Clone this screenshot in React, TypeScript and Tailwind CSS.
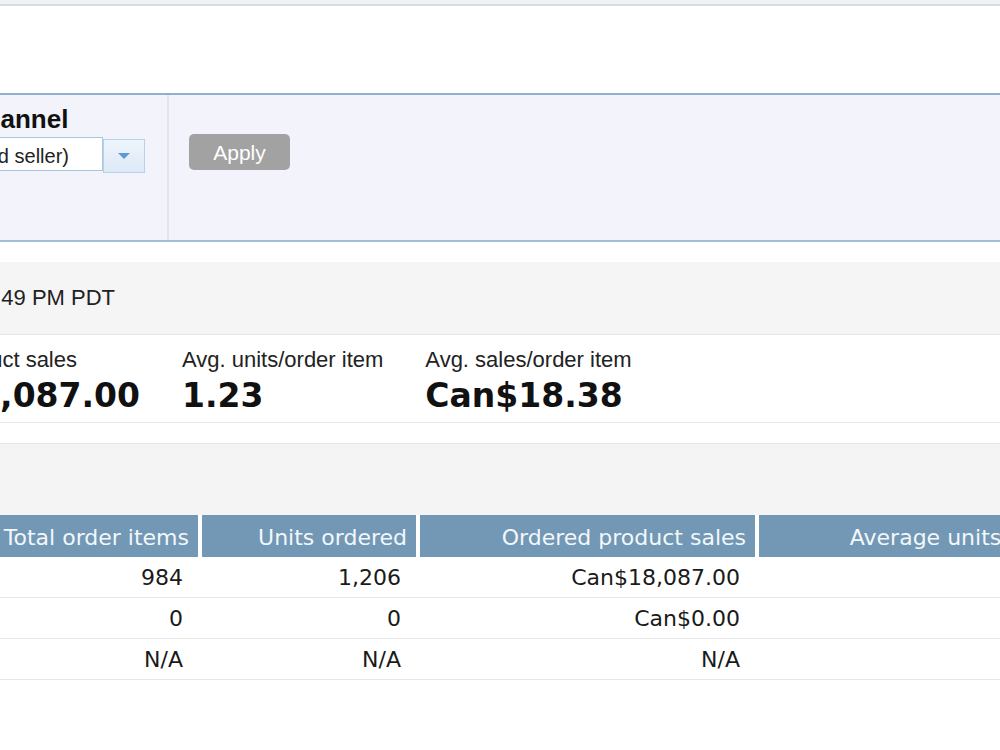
import React from "react";

const arial = "font-['Liberation_Sans',Arial,sans-serif]";
const verdana = "font-['DejaVu_Sans',Verdana,sans-serif]";

const rows = [
  { label: "Selected date range", items: "984", units: "1,206", sales: "Can$18,087.00", avg: "1.23" },
  { label: "Same day last week", items: "0", units: "0", sales: "Can$0.00", avg: "0" },
  { label: "% change", items: "N/A", units: "N/A", sales: "N/A", avg: "N/A" },
];

export default function App() {
  return (
    <div className={`w-[1000px] h-[750px] overflow-hidden bg-white ${arial} text-[#111]`}>
      {/* nav edge */}
      <div className="h-[4px] bg-[#f1f1f1]" />
      <div className="h-[2px] bg-[#d2dce6]" />
      <div className="h-[87px]" />

      {/* Filters */}
      <div className="flex h-[149px] border-t-2 border-b-2 border-t-[#8fb0d2] border-b-[#a0bedb] bg-[#f2f3fb]">
        <div className="w-[169px] shrink-0 border-r-2 border-[#e3e4eb] overflow-hidden">
          <div className="-ml-[105px] pt-[11px]">
            <div className="text-[26px] leading-none font-bold whitespace-nowrap">Sales channel</div>
            <div className="mt-[5px] flex items-start">
              <div className="w-[208px] h-[34px] bg-white border border-[#a9c6e0] flex items-center justify-end pr-[33px] pt-[3px] overflow-hidden">
                <span className="text-[20px] leading-none whitespace-nowrap text-[#222]">
                  Both (Amazon and seller)
                </span>
              </div>
              <div className="mt-[2px] w-[42px] h-[34px] border border-[#b9d1e8] bg-gradient-to-b from-[#eef5fc] to-[#dde9f6] flex items-center justify-center">
                <svg width="14" height="8" viewBox="0 0 14 8">
                  <path d="M1 1h12L7 7z" fill="#5b9bd5" />
                </svg>
              </div>
            </div>
          </div>
        </div>
        <div className="pl-[20px] pt-[39px]">
          <button className="w-[101px] h-[36px] rounded-[5px] bg-[#a2a2a2] text-white text-[21px] leading-none">
            Apply
          </button>
        </div>
      </div>

      <div className="h-[20px]" />

      {/* Last updated */}
      <div className="h-[72px] bg-[#f5f5f5] flex items-center overflow-hidden">
        <div className="w-[420px] -ml-[305px] shrink-0 text-right text-[22px] leading-none text-[#222] whitespace-nowrap">
          Last updated 6/10/2020 1:49 PM PDT
        </div>
      </div>

      {/* Snapshot metrics */}
      <div className="h-[89px] border-t border-b border-[#e6e6e6] flex gap-[42px] pt-[14px] overflow-hidden">
        <div className="w-[340px] -ml-[200px] shrink-0 flex flex-col items-end">
          <div className="mr-[63px] text-[22px] leading-none text-[#222] whitespace-nowrap">Ordered product sales</div>
          <div className={`mt-[8px] text-[33px] leading-none font-bold ${verdana} whitespace-nowrap`}>Can$18,087.00</div>
        </div>
        <Metric label="Avg. units/order item" value="1.23" />
        <Metric label="Avg. sales/order item" value="Can$18.38" />
      </div>

      <div className="h-[20px]" />
      <div className="h-[72px] border-t border-[#e6e6e6] bg-[#f4f4f4]" />

      {/* Sales table */}
      <div className={`${verdana} text-[22px] leading-none overflow-hidden`}>
        <div className="flex gap-[4px] -ml-[244px] h-[42px]">
          <HeadCell w="w-[200px]" text="" />
          <HeadCell w="w-[238px]" text="Total order items" />
          <HeadCell w="w-[214px]" text="Units ordered" />
          <HeadCell w="w-[335px]" text="Ordered product sales" />
          <HeadCell w="w-[374px]" text="Average units/order item" />
        </div>
        {rows.map((r) => (
          <div key={r.label} className="h-[41px] border-b border-[#e6e6e6] overflow-hidden">
            <div className="flex gap-[4px] -ml-[244px] h-full items-center pt-[1px]">
              <BodyCell w="w-[200px]" text={r.label} />
              <BodyCell w="w-[238px]" text={r.items} />
              <BodyCell w="w-[214px]" text={r.units} />
              <BodyCell w="w-[335px]" text={r.sales} />
              <BodyCell w="w-[374px]" text={r.avg} />
            </div>
          </div>
        ))}
      </div>
    </div>
  );
}

function Metric({ label, value }: { label: string; value: string }) {
  return (
    <div className="shrink-0">
      <div className="text-[22px] leading-none text-[#222] whitespace-nowrap">{label}</div>
      <div className={`mt-[8px] text-[33px] leading-none font-bold ${verdana} whitespace-nowrap`}>{value}</div>
    </div>
  );
}

function HeadCell({ w, text }: { w: string; text: string }) {
  return (
    <div className={`${w} shrink-0 bg-[#7298b5] text-[#f3f7fa] flex items-center justify-end pr-[9px] pt-[3px] whitespace-nowrap overflow-hidden`}>
      {text}
    </div>
  );
}

function BodyCell({ w, text }: { w: string; text: string }) {
  return (
    <div className={`${w} shrink-0 text-right pr-[15px] whitespace-nowrap text-[#1a1a1a]`}>{text}</div>
  );
}
